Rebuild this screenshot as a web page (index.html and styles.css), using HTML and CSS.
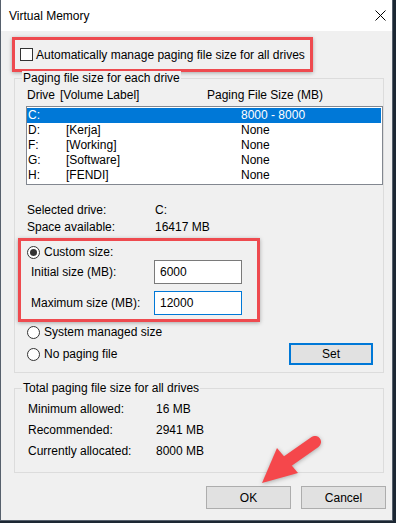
FILE: index.html
```html
<!DOCTYPE html>
<html lang="en">
  <head>
    <meta charset="UTF-8" />
    <link rel="stylesheet" href="styles.css">
  </head>
  <body>
    <div class="window">
      <div class="titlebar">
        <span>Virtual Memory</span>
        <svg class="close" width="11" height="11" viewBox="0 0 11 11">
          <path d="M0.5 0.5 L10.5 10.5 M10.5 0.5 L0.5 10.5" stroke="#000" stroke-width="1" fill="none" />
        </svg>
      </div>

      <div class="content">
        <div class="mark auto-mark">
          <label class="check-row"><span class="checkbox"></span>Automatically manage paging file size for all drives</label>
        </div>

        <div class="group">
          <div class="group-title">Paging file size for each drive</div>
          <div class="list-head">
            <span>Drive</span>
            <span>[Volume Label]</span>
            <span>Paging File Size (MB)</span>
          </div>
          <div class="listbox">
            <div class="row selected"><span>C:</span><span></span><span>8000 - 8000</span></div>
            <div class="row"><span>D:</span><span>[Kerja]</span><span>None</span></div>
            <div class="row"><span>F:</span><span>[Working]</span><span>None</span></div>
            <div class="row"><span>G:</span><span>[Software]</span><span>None</span></div>
            <div class="row"><span>H:</span><span>[FENDI]</span><span>None</span></div>
          </div>

          <div class="info">
            <span>Selected drive:</span><span>C:</span>
            <span>Space available:</span><span>16417 MB</span>
          </div>

          <div class="mark custom-mark">
            <div class="radio-row"><span class="radio checked"></span>Custom size:</div>
            <div class="size-row">
              <span>Initial size (MB):</span>
              <div class="field">6000</div>
            </div>
            <div class="size-row">
              <span>Maximum size (MB):</span>
              <div class="field focused">12000</div>
            </div>
          </div>

          <div class="radio-row plain"><span class="radio"></span>System managed size</div>
          <div class="set-row">
            <div class="radio-row"><span class="radio"></span>No paging file</div>
            <button class="btn set-btn">Set</button>
          </div>
        </div>

        <div class="group totals">
          <div class="group-title">Total paging file size for all drives</div>
          <div class="stats">
            <span>Minimum allowed:</span><span>16 MB</span>
            <span>Recommended:</span><span>2941 MB</span>
            <span>Currently allocated:</span><span>8000 MB</span>
          </div>
        </div>

        <div class="actions">
          <button class="btn">OK</button>
          <button class="btn">Cancel</button>
        </div>
      </div>

      <svg class="arrow" width="70" height="60" viewBox="0 0 70 60">
        <line x1="60" y1="12" x2="30" y2="33" stroke="#f5474b" stroke-width="12" stroke-linecap="round" />
        <polygon points="7,53 22,18 43,43" fill="#f5474b" />
      </svg>
    </div>
  </body>
</html>
```

FILE: styles.css
```css
body {
  margin: 0;
  background: #1c2733;
  font-family: "Liberation Sans", Arial, sans-serif;
  font-size: 12px;
  color: #000;
}

.window {
  position: relative;
  width: 393px;
  height: 521px;
  box-sizing: border-box;
  border: 1px solid #56606c;
  border-top: none;
  background: #f0f0f0;
}

.titlebar {
  height: 31px;
  background: #fff;
  display: flex;
  align-items: center;
  justify-content: space-between;
  padding: 0 6px 0 8px;
}

.close {
  margin-top: -1px;
}

.content {
  padding: 6px 0 0 12px;
}

.mark {
  box-sizing: border-box;
  border: 3px solid #ee4a4f;
  box-shadow: 0 1px 4px rgba(0, 0, 0, 0.3);
}

.auto-mark {
  margin-left: -1px;
  width: 301px;
  height: 35px;
  display: flex;
  align-items: center;
  padding-left: 5px;
}

.check-row {
  display: flex;
  align-items: center;
  gap: 3px;
  white-space: nowrap;
}

.checkbox {
  width: 13px;
  height: 13px;
  box-sizing: border-box;
  border: 1px solid #333;
  background: #fff;
}

.group {
  margin-top: 6px;
  margin-left: 1px;
  width: 370px;
  box-sizing: border-box;
  border: 1px solid #dcdcdc;
  padding-bottom: 7px;
}

.group-title {
  margin: -8px 0 0 7px;
  padding: 0 1px;
  width: max-content;
  background: #f0f0f0;
  line-height: 15px;
}

.list-head {
  margin-top: 2px;
  padding-left: 12px;
  display: grid;
  grid-template-columns: 33px 147px auto;
  line-height: 15px;
  white-space: nowrap;
}

.listbox {
  margin: 3px 0 0 11px;
  width: 357px;
  height: 79px;
  box-sizing: border-box;
  border: 1px solid #828790;
  background: #fff;
  padding: 1px 1px 1px 0;
}

.row {
  display: grid;
  grid-template-columns: 38px 175px auto;
  height: 15px;
  line-height: 15px;
  padding-left: 1px;
}

.row.selected {
  background: #0078d7;
  color: #fff;
}

.info,
.stats {
  display: grid;
  grid-template-columns: 128px auto;
  line-height: 15px;
}

.info {
  margin-top: 18px;
  padding-left: 12px;
  row-gap: 2px;
}

.custom-mark {
  margin: 3px 0 0 3px;
  width: 242px;
  height: 84px;
  padding-top: 4px;
  display: flex;
  flex-direction: column;
}

.radio-row {
  display: flex;
  align-items: center;
  gap: 4px;
  line-height: 15px;
}

.custom-mark .radio-row {
  padding-left: 6px;
}

.radio {
  width: 13px;
  height: 13px;
  box-sizing: border-box;
  border: 1px solid #333;
  border-radius: 50%;
  background: #fff;
  display: flex;
  align-items: center;
  justify-content: center;
}

.radio.checked::after {
  content: "";
  width: 7px;
  height: 7px;
  border-radius: 50%;
  background: #333;
}

.size-row {
  display: grid;
  grid-template-columns: 123px 88px;
  align-items: center;
  padding-left: 10px;
  height: 24px;
}

.size-row + .size-row {
  margin-top: 7px;
}

.field {
  height: 24px;
  box-sizing: border-box;
  border: 1px solid #7a7a7a;
  background: #fff;
  padding-left: 5px;
  line-height: 22px;
}

.field.focused {
  border-color: #0078d7;
}

.plain {
  margin-top: 3px;
  padding-left: 12px;
}

.set-row {
  margin-top: 3px;
  height: 22px;
  display: flex;
  align-items: center;
  justify-content: space-between;
  padding: 0 10px 0 12px;
}

.btn {
  font: inherit;
  color: #000;
  width: 85px;
  height: 23px;
  box-sizing: border-box;
  border: 1px solid #adadad;
  background: #e1e1e1;
  padding: 0;
}

.set-btn {
  width: 84px;
  height: 22px;
  border: 2px solid #0078d7;
}

.totals {
  margin-top: 15px;
  padding-bottom: 13px;
}

.stats {
  margin-top: 6px;
  padding-left: 13px;
  row-gap: 6px;
}

.actions {
  margin-top: 13px;
  display: flex;
  justify-content: flex-end;
  gap: 10px;
  padding-right: 6px;
}

.arrow {
  position: absolute;
  left: 254px;
  top: 430px;
  filter: drop-shadow(0 1px 2px rgba(0, 0, 0, 0.3));
}
```
